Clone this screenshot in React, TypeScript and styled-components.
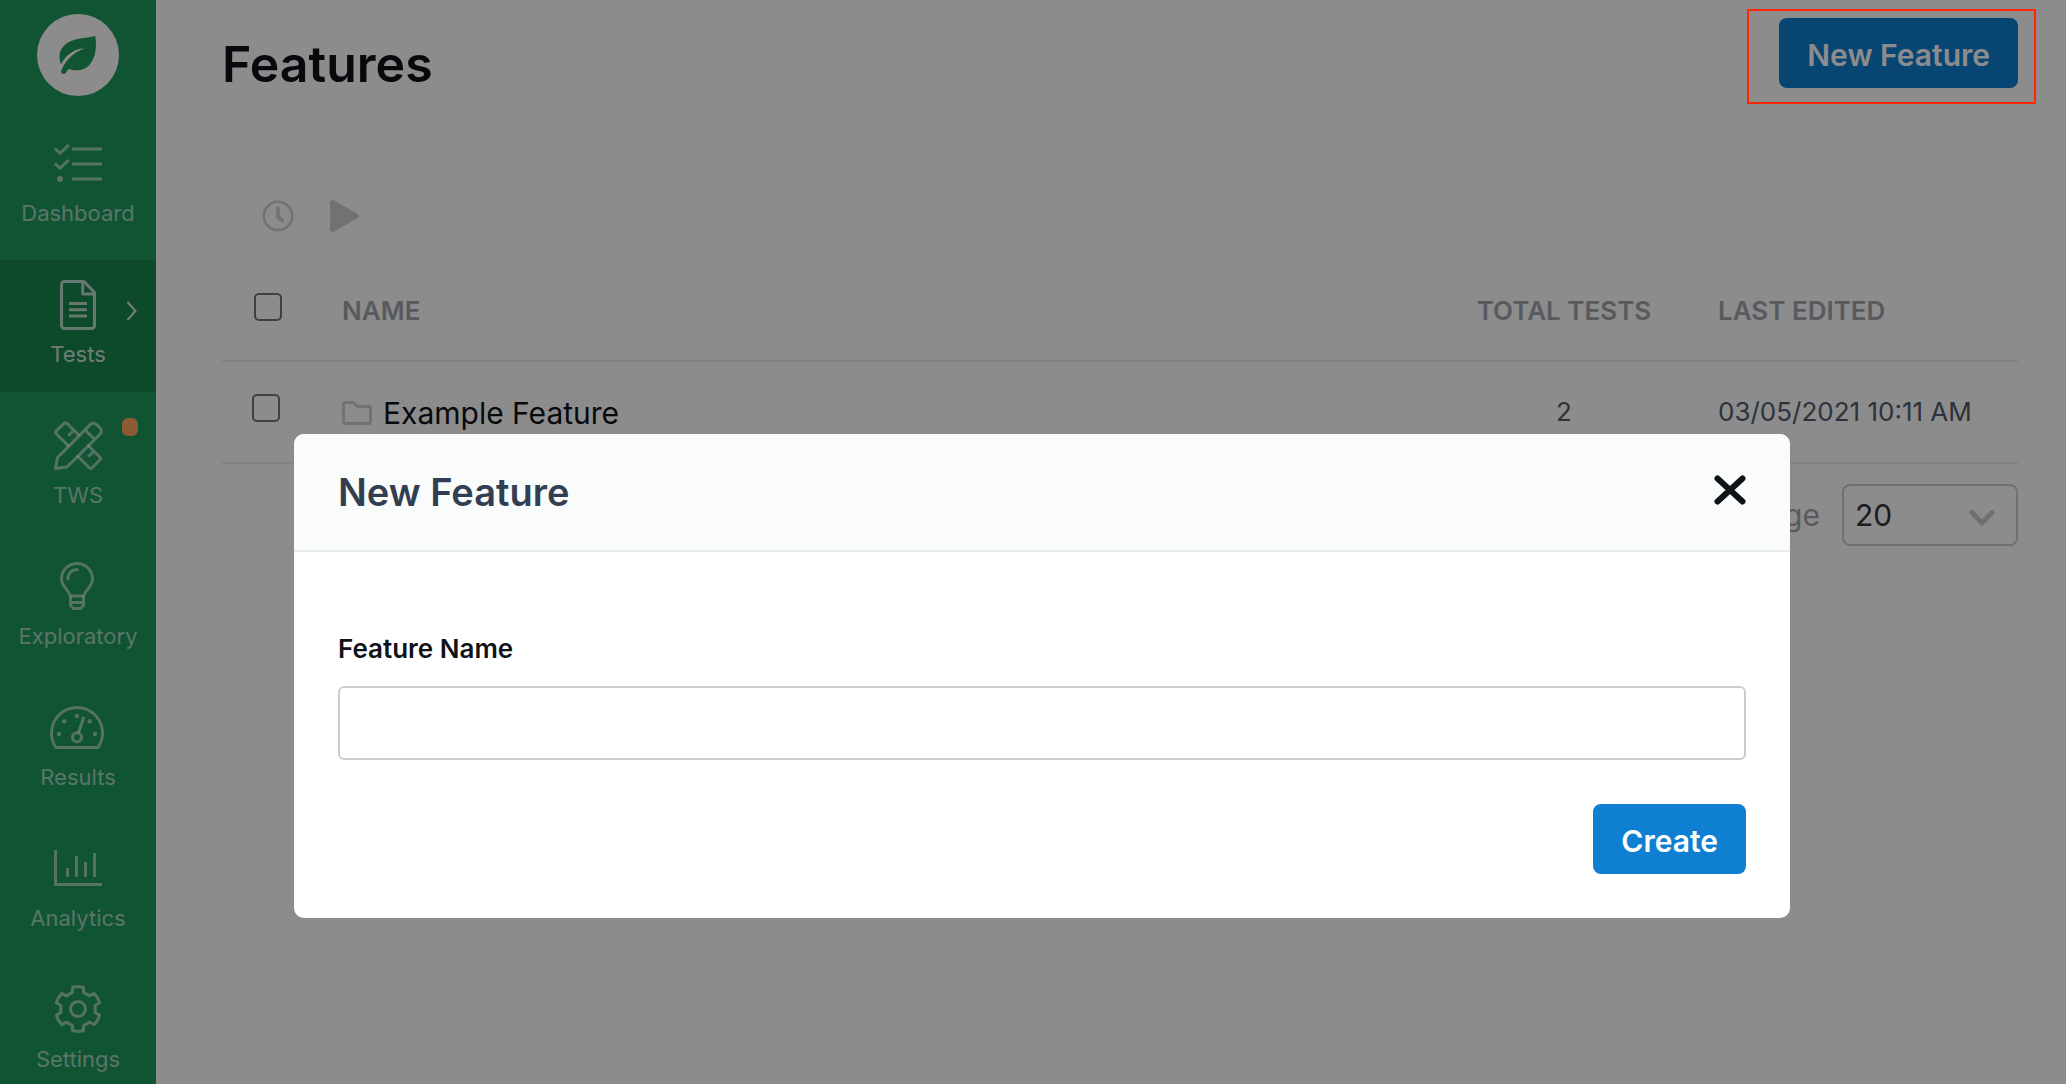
import React from "react";
import styled, { createGlobalStyle } from "styled-components";

const GlobalStyle = createGlobalStyle`
  *, *::before, *::after { box-sizing: border-box; }
  html, body { margin: 0; padding: 0; background: #ffffff; }
  body { font-family: Inter, Roboto, "Liberation Sans", sans-serif; color: #0d1117; }
  button, input, select { font-family: inherit; }
`;

const Page = styled.div`
  display: flex;
  height: 100vh;
  overflow: hidden;
`;

/* ---------- Sidebar ---------- */

const Sidebar = styled.nav`
  flex: 0 0 156px;
  display: flex;
  flex-direction: column;
  align-items: stretch;
  padding-top: 14px;
  background: #1f995f;
  overflow: hidden;
`;

const Logo = styled.a`
  align-self: center;
  flex: none;
  display: block;
  width: 82px;
  height: 82px;
  margin-bottom: 23px;
  border-radius: 50%;
  background: #ffffff;
`;

const NavList = styled.ul`
  display: flex;
  flex-direction: column;
  gap: 9px;
  margin: 0;
  padding: 0;
  list-style: none;
`;

const NavLink = styled.a<{ $active?: boolean }>`
  position: relative;
  display: flex;
  flex-direction: column;
  align-items: center;
  gap: 11px;
  height: 132px;
  padding-top: 20px;
  background: ${(p) => (p.$active ? "#19854f" : "transparent")};
  color: ${(p) => (p.$active ? "#ffffffb3" : "#ffffff8c")};
  text-decoration: none;
`;

const NavIcon = styled.svg`
  display: block;
  width: 56px;
  height: 50px;
  fill: none;
  stroke: currentColor;
  stroke-width: 3;
`;

const NavLabel = styled.span<{ $active?: boolean }>`
  color: ${(p) => (p.$active ? "#ffffffcc" : "#ffffff99")};
  font-size: 22px;
  line-height: 26px;
`;

const SubmenuArrow = styled.svg`
  position: absolute;
  top: 40px;
  right: 18px;
  width: 12px;
  height: 22px;
  fill: none;
  stroke: #ffffffcc;
  stroke-width: 2;
`;

const NoticeBadge = styled.span`
  position: absolute;
  top: 17px;
  right: 18px;
  width: 16px;
  height: 18px;
  border-radius: 6px;
  background: #ffa45d;
`;

/* ---------- Main ---------- */

const Main = styled.main`
  flex: 1;
  min-width: 0;
  padding: 18px 48px 0 66px;
`;

const Header = styled.header`
  display: flex;
  justify-content: space-between;
  align-items: flex-start;
  min-height: 182px;
`;

const Title = styled.h1`
  margin: 17px 0 0;
  font-size: 50px;
  line-height: 58px;
  font-weight: 600;
`;

const PrimaryButton = styled.button`
  height: 70px;
  padding: 4px 28px 0;
  border: 0;
  border-radius: 8px;
  background: #0e7fd1;
  color: #ffffff;
  font-size: 30px;
  line-height: 36px;
  font-weight: 600;
`;

const Toolbar = styled.div`
  display: flex;
  gap: 36px;
  padding-left: 40px;
  margin-bottom: 28px;
`;

const ToolButton = styled.button`
  display: block;
  padding: 0;
  border: 0;
  background: none;
  color: #cccfd2;
  svg { display: block; }
`;

const Table = styled.table`
  width: 100%;
  border-collapse: separate;
  border-spacing: 0;
  table-layout: fixed;
`;

const HeadCell = styled.th<{ $width?: number; $center?: boolean }>`
  width: ${(p) => (p.$width ? `${p.$width}px` : "auto")};
  height: 102px;
  padding: 2px 0 0;
  border-bottom: 2px solid #ebedef;
  color: #a0a5ae;
  font-size: 26px;
  line-height: 32px;
  font-weight: 600;
  text-align: ${(p) => (p.$center ? "center" : "left")};
`;

const Cell = styled.td<{ $center?: boolean }>`
  height: 102px;
  padding: 0;
  border-bottom: 2px solid #ebedef;
  color: #525d6e;
  font-size: 26px;
  line-height: 32px;
  text-align: ${(p) => (p.$center ? "center" : "left")};
`;

const CheckWrap = styled.div<{ $indent: number }>`
  padding: 0 0 8px ${(p) => p.$indent}px;
`;

const Checkbox = styled.input`
  appearance: none;
  display: block;
  width: 28px;
  height: 28px;
  margin: 0;
  border: 2px solid #767676;
  border-radius: 5px;
  background: #ffffff;
`;

const FeatureLink = styled.a`
  display: flex;
  align-items: center;
  gap: 11px;
  padding-top: 2px;
  color: #0d1117;
  font-size: 30px;
  line-height: 36px;
  text-decoration: none;
`;

const Pager = styled.div`
  display: flex;
  justify-content: flex-end;
  align-items: center;
  gap: 22px;
  margin-top: 20px;
`;

const PagerLabel = styled.label`
  color: #a0a5ae;
  font-size: 30px;
  line-height: 36px;
`;

const SelectBox = styled.div`
  position: relative;
  width: 176px;
`;

const Select = styled.select`
  appearance: none;
  display: block;
  width: 100%;
  height: 62px;
  padding: 0 11px;
  border: 2px solid #cccccc;
  border-radius: 8px;
  background: #ffffff;
  color: #333333;
  font-size: 30px;
`;

const SelectChevron = styled.svg`
  position: absolute;
  top: 24px;
  right: 22px;
  width: 28px;
  height: 20px;
  fill: none;
  stroke: #cccccc;
  stroke-width: 5;
  stroke-linecap: round;
  stroke-linejoin: round;
  pointer-events: none;
`;

/* ---------- Dialog ---------- */

const Overlay = styled.div`
  position: fixed;
  inset: 0;
  padding: 434px 276px 0 294px;
  background: rgba(0, 0, 0, 0.45);
`;

const Dialog = styled.section`
  border-radius: 10px;
  background: #ffffff;
  overflow: hidden;
`;

const DialogHeader = styled.header`
  display: flex;
  justify-content: space-between;
  align-items: center;
  height: 118px;
  padding: 0 44px;
  border-bottom: 2px solid #ebeeef;
  background: #fafcfb;
`;

const DialogTitle = styled.h2`
  margin: 0;
  color: #323e51;
  font-size: 38px;
  line-height: 48px;
  font-weight: 600;
`;

const CloseButton = styled.button`
  padding: 0 0 4px;
  border: 0;
  background: none;
  svg { display: block; }
`;

const Form = styled.form`
  display: flex;
  flex-direction: column;
  padding: 80px 44px 44px;
`;

const FieldLabel = styled.label`
  color: #0f1317;
  font-size: 26px;
  line-height: 34px;
  font-weight: 600;
`;

const TextInput = styled.input`
  width: 100%;
  height: 74px;
  margin: 20px 0 44px;
  padding: 0 16px;
  border: 2px solid #c9cdd2;
  border-radius: 6px;
  background: #ffffff;
  font-size: 30px;
  outline: none;
`;

const FormActions = styled.div`
  display: flex;
  justify-content: flex-end;
`;

const HighlightFrame = styled.div`
  position: fixed;
  top: 9px;
  right: 30px;
  width: 289px;
  height: 95px;
  border: 2px solid #ff2600;
  pointer-events: none;
`;

/* ---------- Icons ---------- */

const LeafMark = () => (
  <svg width="82" height="82" viewBox="0 0 82 82" aria-hidden="true">
    <path
      fill="#1f995f"
      d="M58.200 22 C52 23.800 45 23.800 38.500 25.500 C28 28.500 22.500 34.500 22.500 42.500 C22.500 45.500 23 48 24.200 50 C28 42.500 36 34.500 47.500 34.500 C38 37.500 31 44.500 27 51 C25.500 53.500 24.600 55.500 24.200 57 C23.600 60 27.800 61 29 58.500 C30 56.500 31 55.500 32 55 C38 57.300 47 57 52.500 51 C59 43 60 32 58.200 22 Z"
    />
  </svg>
);

const TasksIcon = () => (
  <NavIcon viewBox="0 0 56 50">
    <path d="M4.800 9.500 L10 14.300 L18.600 6.200 M4.800 24.500 L10 29.300 L18.600 21.200 M22 10 H52 M22 25 H52 M22 40 H52" />
    <circle cx="10" cy="40" r="3" fill="currentColor" stroke="none" />
  </NavIcon>
);

const FileIcon = () => (
  <NavIcon viewBox="0 0 56 50" strokeLinejoin="round">
    <path d="M14.500 1.500 H34 L44.500 12.500 V45.500 a3 3 0 0 1 -3 3 H14.500 a3 3 0 0 1 -3 -3 V4.500 a3 3 0 0 1 3 -3 Z M32.700 1.500 V14 H44.500" />
    <path d="M19 23.500 H37 M19 29.700 H37 M19 36 H37" />
  </NavIcon>
);

const PencilRulerIcon = () => (
  <NavIcon viewBox="0 0 56 50" strokeLinejoin="round">
    <path d="M5.500 47.500 L7.500 36.500 L40.500 3.400 Q43.500 0.800 46.500 3.400 L50.200 7 Q52.400 10 50.200 13 L17 46 Z M35 9 L44.800 18.400" />
    <path d="M19 25.500 L6.200 12.700 Q5 11.200 6.200 9.800 L14.200 2.400 Q15.500 1.200 17 2.400 L29.500 14.800 M23.500 9.500 L18.300 14.700" />
    <path d="M37.500 23.700 L50 36.200 Q51 37.500 50 38.700 L42 47 Q40.700 48.200 39.400 47 L27 34.500 M43.500 30.500 L38.300 35.700" />
  </NavIcon>
);

const BulbIcon = () => (
  <NavIcon viewBox="0 0 56 50" strokeLinejoin="round">
    <path d="M20.500 34 C19 28 11.500 25 11.500 17 A15.500 15.500 0 0 1 42.500 17 C42.500 25 35 28 33.500 34 Z" />
    <path d="M20.500 34 V43.500 L23.500 46.500 H30.500 L33.500 43.500 V34 M20.500 40.500 H33.500" />
    <path strokeLinecap="round" d="M17.800 17 A9.500 9.500 0 0 1 27.300 7.500" />
  </NavIcon>
);

const GaugeIcon = () => (
  <NavIcon viewBox="0 0 56 50" strokeLinejoin="round">
    <path d="M6 44.500 A25.500 25.500 0 1 1 48 44.500 Z" />
    <circle cx="27" cy="34.300" r="4.500" />
    <path strokeLinecap="round" d="M28.700 29 L33.500 15" />
    <g fill="currentColor" stroke="none">
      <circle cx="9" cy="31" r="2.200" />
      <circle cx="14.300" cy="18.300" r="2.200" />
      <circle cx="27" cy="13" r="2.200" />
      <circle cx="39.700" cy="18.300" r="2.200" />
      <circle cx="45" cy="31" r="2.200" />
    </g>
  </NavIcon>
);

const ChartIcon = () => (
  <NavIcon viewBox="0 0 56 50">
    <path d="M5.500 6 V40.500 H52 M17.500 24 V33 M26.500 12 V33 M35.500 18 V33 M44.500 9 V33" />
  </NavIcon>
);

/* Six-toothed cog: one tooth profile turned around the centre. */
const toothProfile: [number, number][] = [
  [-5.6, -16.6],
  [-5.4, -21.8],
  [0, -22.6],
  [5.4, -21.8],
  [5.6, -16.6],
];
const cogPoints = [0, 1, 2, 3, 4, 5]
  .flatMap((step) => {
    const a = (step * Math.PI) / 3;
    return toothProfile.map(
      ([x, y]) =>
        `${28 + x * Math.cos(a) - y * Math.sin(a)},${24 + x * Math.sin(a) + y * Math.cos(a)}`
    );
  })
  .join(" ");

const CogIcon = () => (
  <NavIcon viewBox="0 0 56 50" strokeLinejoin="round">
    <polygon points={cogPoints} />
    <circle cx="28" cy="24" r="7.500" />
  </NavIcon>
);

const ClockIcon = () => (
  <svg width="32" height="32" viewBox="0 0 32 32" fill="none" stroke="currentColor" aria-hidden="true">
    <circle cx="16" cy="16" r="14.200" strokeWidth="2.600" />
    <path d="M16 8 V17 L20.500 20.500" strokeWidth="3.600" strokeLinecap="round" strokeLinejoin="round" />
  </svg>
);

const PlayIcon = () => (
  <svg width="29" height="32" viewBox="0 0 29 32" fill="currentColor" stroke="currentColor" aria-hidden="true">
    <path d="M2.500 2.500 V29.500 L26 16 Z" strokeWidth="5" strokeLinejoin="round" />
  </svg>
);

const FolderIcon = () => (
  <svg width="30" height="24" viewBox="0 0 30 24" fill="none" stroke="#cccfd2" strokeWidth="3" strokeLinejoin="round" aria-hidden="true">
    <path d="M1.500 3 a1.500 1.500 0 0 1 1.500 -1.500 H11.500 L15.500 5.500 H27 a1.500 1.500 0 0 1 1.500 1.500 V21 a1.500 1.500 0 0 1 -1.500 1.500 H3 a1.500 1.500 0 0 1 -1.500 -1.500 Z" />
  </svg>
);

const CrossIcon = () => (
  <svg width="32" height="30" viewBox="0 0 32 30" fill="none" stroke="#0f1317" strokeWidth="6" strokeLinecap="round" aria-hidden="true">
    <path d="M3.500 3.500 L28.500 26.500 M28.500 3.500 L3.500 26.500" />
  </svg>
);

/* ---------- App ---------- */

const navItems = [
  { label: "Dashboard", Icon: TasksIcon },
  { label: "Tests", Icon: FileIcon, active: true },
  { label: "TWS", Icon: PencilRulerIcon, notice: true },
  { label: "Exploratory", Icon: BulbIcon },
  { label: "Results", Icon: GaugeIcon },
  { label: "Analytics", Icon: ChartIcon },
  { label: "Settings", Icon: CogIcon },
];

const features = [{ name: "Example Feature", tests: 2, edited: "03/05/2021 10:11 AM" }];

export default function App() {
  return (
    <>
      <GlobalStyle />
      <Page>
        <Sidebar>
          <Logo href="#home" aria-label="Home">
            <LeafMark />
          </Logo>
          <NavList>
            {navItems.map(({ label, Icon, active, notice }) => (
              <li key={label}>
                <NavLink href={`#${label.toLowerCase()}`} $active={active}>
                  <Icon />
                  <NavLabel $active={active}>{label}</NavLabel>
                  {active && (
                    <SubmenuArrow viewBox="0 0 12 22">
                      <path d="M1.500 2 L9.500 11 L1.500 20" />
                    </SubmenuArrow>
                  )}
                  {notice && <NoticeBadge />}
                </NavLink>
              </li>
            ))}
          </NavList>
        </Sidebar>

        <Main>
          <Header>
            <Title>Features</Title>
            <PrimaryButton type="button">New Feature</PrimaryButton>
          </Header>

          <Toolbar>
            <ToolButton type="button" aria-label="Schedule">
              <ClockIcon />
            </ToolButton>
            <ToolButton type="button" aria-label="Run">
              <PlayIcon />
            </ToolButton>
          </Toolbar>

          <Table>
            <thead>
              <tr>
                <HeadCell $width={120}>
                  <CheckWrap $indent={32}>
                    <Checkbox type="checkbox" aria-label="Select all features" />
                  </CheckWrap>
                </HeadCell>
                <HeadCell>NAME</HeadCell>
                <HeadCell $width={308} $center>
                  TOTAL TESTS
                </HeadCell>
                <HeadCell $width={300}>LAST EDITED</HeadCell>
              </tr>
            </thead>
            <tbody>
              {features.map((feature) => (
                <tr key={feature.name}>
                  <Cell>
                    <CheckWrap $indent={30}>
                      <Checkbox type="checkbox" aria-label={`Select ${feature.name}`} />
                    </CheckWrap>
                  </Cell>
                  <Cell>
                    <FeatureLink href="#feature">
                      <FolderIcon />
                      {feature.name}
                    </FeatureLink>
                  </Cell>
                  <Cell $center>{feature.tests}</Cell>
                  <Cell>{feature.edited}</Cell>
                </tr>
              ))}
            </tbody>
          </Table>

          <Pager>
            <PagerLabel htmlFor="page-size">Items per page</PagerLabel>
            <SelectBox>
              <Select id="page-size" defaultValue="20">
                <option value="20">20</option>
                <option value="50">50</option>
              </Select>
              <SelectChevron viewBox="0 0 28 20">
                <path d="M4 4.500 L14 15 L24 4.500" />
              </SelectChevron>
            </SelectBox>
          </Pager>
        </Main>
      </Page>

      <Overlay>
        <Dialog role="dialog" aria-modal="true" aria-labelledby="dialog-title">
          <DialogHeader>
            <DialogTitle id="dialog-title">New Feature</DialogTitle>
            <CloseButton type="button" aria-label="Close">
              <CrossIcon />
            </CloseButton>
          </DialogHeader>
          <Form onSubmit={(event) => event.preventDefault()}>
            <FieldLabel htmlFor="feature-name">Feature Name</FieldLabel>
            <TextInput id="feature-name" type="text" />
            <FormActions>
              <PrimaryButton type="submit">Create</PrimaryButton>
            </FormActions>
          </Form>
        </Dialog>
      </Overlay>
      <HighlightFrame />
    </>
  );
}
